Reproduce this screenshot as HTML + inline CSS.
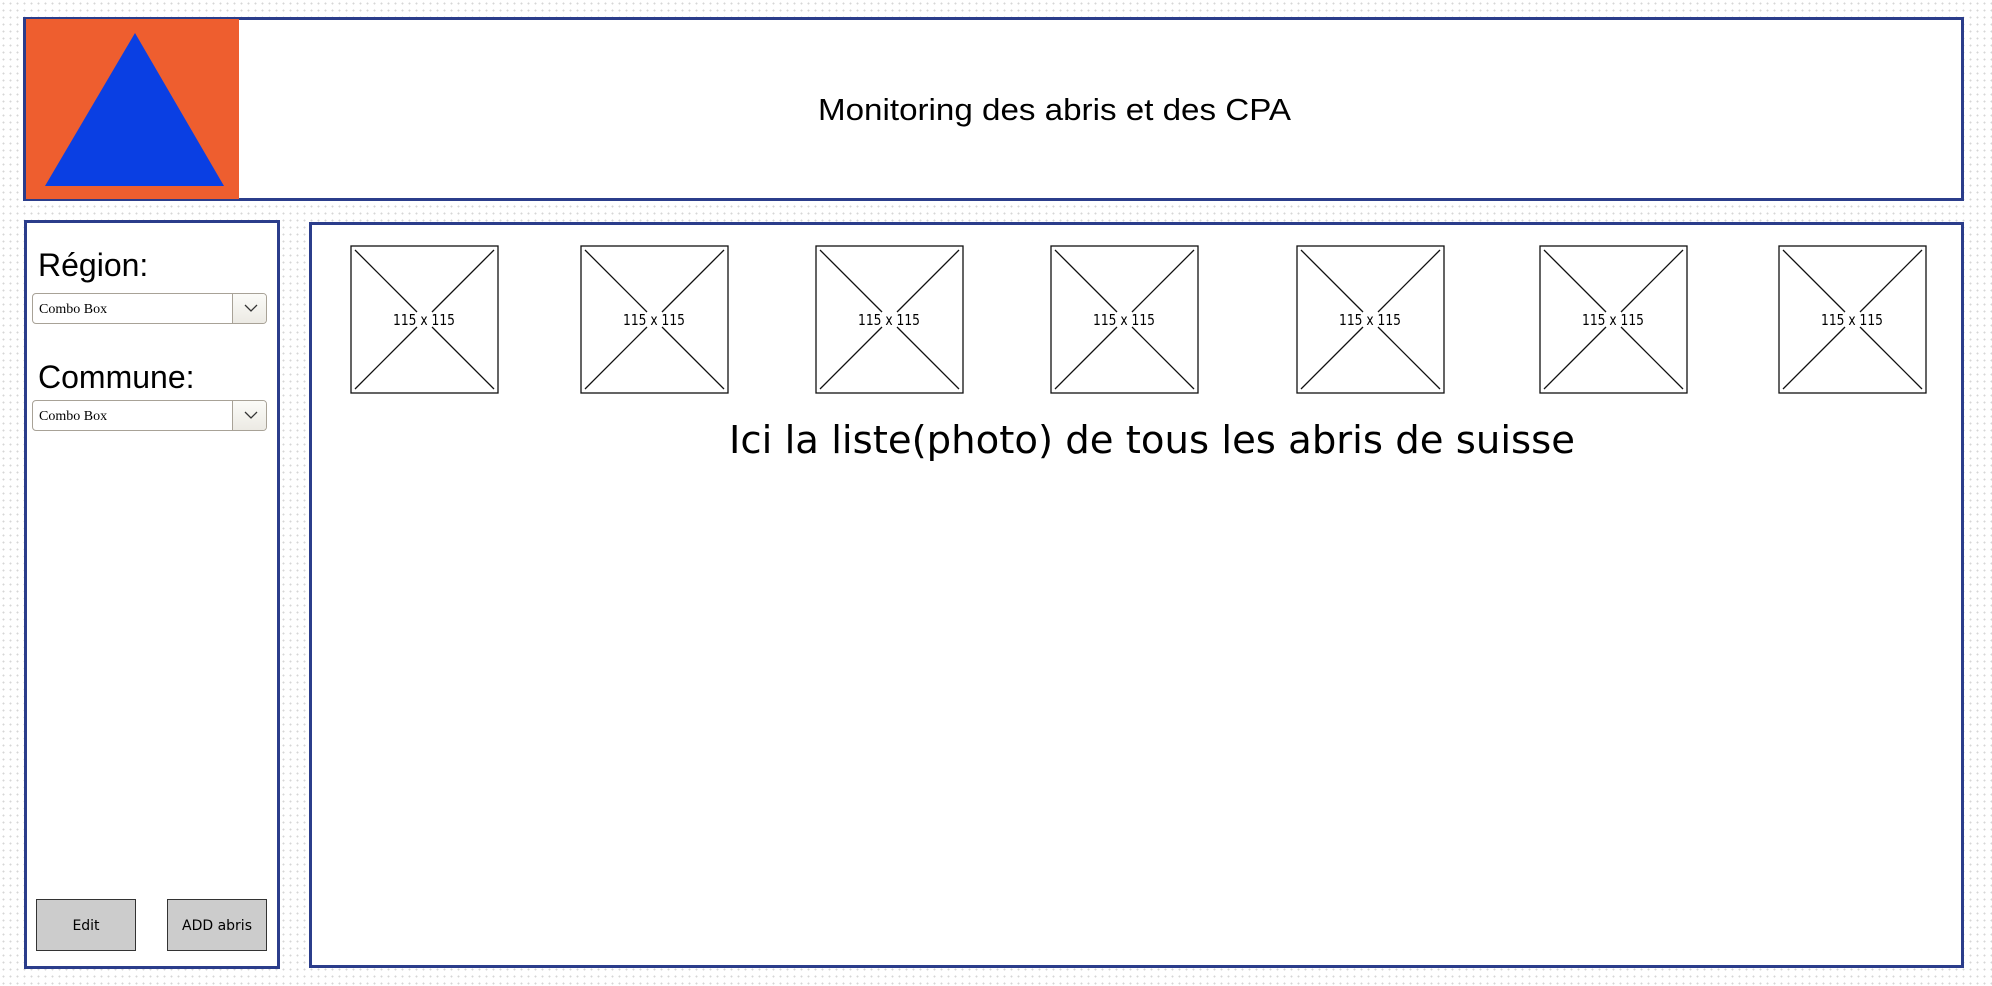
<!DOCTYPE html>
<html><head><meta charset="utf-8"><style>
html,body{margin:0;padding:0;}
body{width:1992px;height:986px;position:relative;overflow:hidden;background-color:#fff;
background-image:radial-gradient(circle,#d6d6d6 0.9px,transparent 1.1px);background-size:7px 7px;
font-family:"Liberation Sans",sans-serif;}
.box{position:absolute;background:#fff;border:3px solid #2b3d8b;box-sizing:border-box;}
.combo{position:absolute;left:32px;width:235px;height:31px;border:1.5px solid #a8a297;border-radius:4px;background:#fff;box-sizing:border-box;font-family:"Liberation Serif",serif;font-size:14px;}
.combo span{position:absolute;left:6px;top:8px;}
.combo i{position:absolute;right:0;top:0;width:33px;height:100%;border-left:1.5px solid #a8a297;background:linear-gradient(#fbfbf8,#eceae4);border-radius:0 3px 3px 0;}
.btn{position:absolute;top:899px;height:52px;background:#ccc;border:1.5px solid #333;box-sizing:border-box;font-family:"Comic Sans MS","DejaVu Sans",cursive;font-size:14px;text-align:center;line-height:52px;}
</style></head><body>
<div class="box" style="left:23px;top:17px;width:1941px;height:184px;"></div>
<div style="position:absolute;left:26px;top:19px;width:213px;height:180px;background:#ee5e2f;"></div>
<svg style="position:absolute;left:0;top:0" width="1992" height="986">
<polygon points="135,33 224,186 45,186" fill="#0a3fe3"/>
<text x="818" y="120" font-family="Liberation Sans" font-size="31" textLength="473" lengthAdjust="spacingAndGlyphs">Monitoring des abris et des CPA</text>
</svg>
<div class="box" style="left:24px;top:220px;width:256px;height:749px;"></div>
<div class="box" style="left:309px;top:222px;width:1655px;height:746px;"></div>
<div style="position:absolute;left:38px;top:247px;font-size:32px;">Région:</div>
<div class="combo" style="top:293px;"><span>Combo Box</span><i></i></div>
<div style="position:absolute;left:38px;top:359px;font-size:32px;">Commune:</div>
<div class="combo" style="top:400px;"><span>Combo Box</span><i></i></div>
<svg style="position:absolute;left:0;top:0" width="1992" height="986">
<polyline points="245,305 251,311 257,305" fill="none" stroke="#333" stroke-width="1.3"/>
<polyline points="245,412 251,418 257,412" fill="none" stroke="#333" stroke-width="1.3"/>
<defs><g id="ph"><rect x="0" y="0" width="147" height="147" fill="#fff" stroke="#111" stroke-width="1.3"/><g stroke="#111" stroke-width="1.3"><line x1="4" y1="4" x2="66" y2="66"/><line x1="81" y1="66" x2="143" y2="4"/><line x1="4" y1="143" x2="66" y2="81"/><line x1="81" y1="81" x2="143" y2="143"/></g></g></defs>
<g font-family="Comic Sans MS, DejaVu Sans, cursive" font-size="15" text-anchor="middle" fill="#000">
<g transform="translate(351,246)"><use href="#ph"/><text x="73" y="79" textLength="62" lengthAdjust="spacingAndGlyphs">115 x 115</text></g>
<g transform="translate(581,246)"><use href="#ph"/><text x="73" y="79" textLength="62" lengthAdjust="spacingAndGlyphs">115 x 115</text></g>
<g transform="translate(816,246)"><use href="#ph"/><text x="73" y="79" textLength="62" lengthAdjust="spacingAndGlyphs">115 x 115</text></g>
<g transform="translate(1051,246)"><use href="#ph"/><text x="73" y="79" textLength="62" lengthAdjust="spacingAndGlyphs">115 x 115</text></g>
<g transform="translate(1297,246)"><use href="#ph"/><text x="73" y="79" textLength="62" lengthAdjust="spacingAndGlyphs">115 x 115</text></g>
<g transform="translate(1540,246)"><use href="#ph"/><text x="73" y="79" textLength="62" lengthAdjust="spacingAndGlyphs">115 x 115</text></g>
<g transform="translate(1779,246)"><use href="#ph"/><text x="73" y="79" textLength="62" lengthAdjust="spacingAndGlyphs">115 x 115</text></g>
</g>
<text x="729" y="453" font-family="Comic Sans MS, DejaVu Sans, cursive" font-size="38" textLength="846" lengthAdjust="spacingAndGlyphs">Ici la liste(photo) de tous les abris de suisse</text>
</svg>
<div class="btn" style="left:36px;width:100px;">Edit</div>
<div class="btn" style="left:167px;width:100px;">ADD abris</div>
</body></html>
